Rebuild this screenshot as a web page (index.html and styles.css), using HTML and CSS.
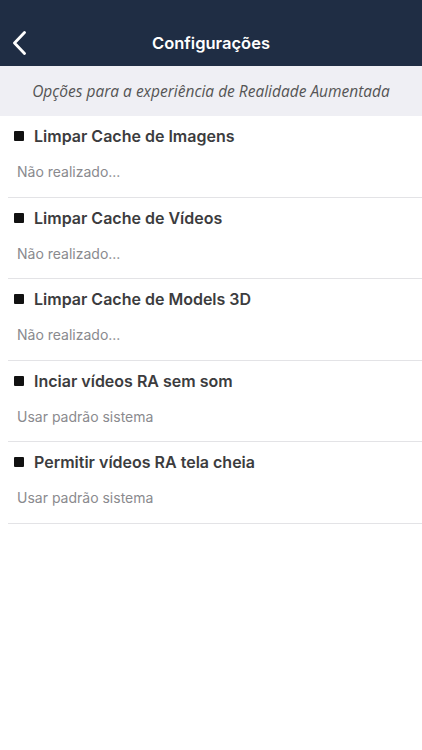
FILE: index.html
```html
<!DOCTYPE html>
<html lang="pt">
  <head>
    <meta charset="UTF-8" />
    <meta name="viewport" content="width=device-width, initial-scale=1.0" />
    <title>Configurações</title>
    <link rel="stylesheet" href="styles.css">
  </head>
  <body>
    <header class="navbar">
      <button class="back" aria-label="Voltar">
        <svg width="15" height="24" viewBox="0 0 15 24">
          <path d="M12.5 1.5 L2.5 12 L12.5 22.5" fill="none" stroke="#fff" stroke-width="2.8" stroke-linecap="round" stroke-linejoin="round" />
        </svg>
      </button>
      <h1>Configurações</h1>
    </header>

    <div class="intro">Opções para a experiência de Realidade Aumentada</div>

    <ul class="settings">
      <li class="item">
        <div class="item-title"><span class="bullet"></span>Limpar Cache de Imagens</div>
        <div class="item-sub">Não realizado...</div>
      </li>
      <li class="item">
        <div class="item-title"><span class="bullet"></span>Limpar Cache de Vídeos</div>
        <div class="item-sub">Não realizado...</div>
      </li>
      <li class="item">
        <div class="item-title"><span class="bullet"></span>Limpar Cache de Models 3D</div>
        <div class="item-sub">Não realizado...</div>
      </li>
      <li class="item">
        <div class="item-title"><span class="bullet"></span>Inciar vídeos RA sem som</div>
        <div class="item-sub">Usar padrão sistema</div>
      </li>
      <li class="item">
        <div class="item-title"><span class="bullet"></span>Permitir vídeos RA tela cheia</div>
        <div class="item-sub">Usar padrão sistema</div>
      </li>
    </ul>
  </body>
</html>
```

FILE: styles.css
```css
body {
  margin: 0;
  font-family: Inter, 'Noto Sans', sans-serif;
  background: #fff;
  min-height: 100vh;
}

.navbar {
  position: relative;
  height: 66px;
  padding-top: 20px;
  box-sizing: border-box;
  background: #1f2d44;
  display: flex;
  align-items: center;
  justify-content: center;
}

.navbar h1 {
  margin: 0;
  color: #fff;
  font-size: 16.5px;
  font-weight: 600;
}

.back {
  position: absolute;
  left: 12px;
  top: 31px;
  padding: 0;
  border: none;
  background: none;
  display: flex;
}

.intro {
  height: 50px;
  background: #efeff4;
  color: #555;
  font-family: 'Open Sans', sans-serif;
  font-style: italic;
  font-size: 15.5px;
  display: flex;
  align-items: center;
  justify-content: center;
}

.settings {
  list-style: none;
  margin: 0;
  padding: 0 0 0 8px;
}

.item {
  height: 81.5px;
  box-sizing: border-box;
  border-bottom: 1px solid #e3e3e6;
  padding-top: 9px;
}

.item-title {
  display: flex;
  align-items: center;
  color: #3c3c3e;
  font-size: 16px;
  font-weight: 600;
  height: 22px;
}

.bullet {
  width: 10px;
  height: 10px;
  margin: 0 10px 0 6px;
  background: #111;
  border-radius: 1px;
}

.item-sub {
  margin-top: 16px;
  padding-left: 9px;
  color: #8a8a8e;
  font-size: 14px;
}
```
